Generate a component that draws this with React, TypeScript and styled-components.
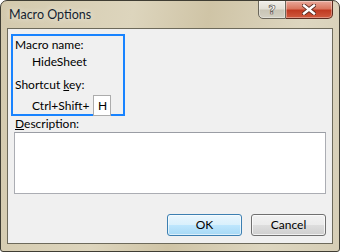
import styled, { createGlobalStyle } from "styled-components"

const GlobalStyle = createGlobalStyle`
    html, body {
        margin: 0;
        padding: 0;
        background: #ffffff;
    }
    body {
        font-family: Lato, "Noto Sans", sans-serif;
        font-size: 12px;
        color: #000;
    }
`

const Window = styled.div`
    width: 340px;
    height: 252px;
    box-sizing: border-box;
    border: 1px solid #3f3d33;
    border-radius: 7px 7px 3px 3px;
    background: linear-gradient(100deg, #d3c9ad 0%, #ddd5bd 35%, #cfc4a6 55%, #ddd6c0 80%, #d6ceb6 100%);
    display: flex;
    flex-direction: column;
    overflow: hidden;
`

const TitleBar = styled.div`
    height: 27px;
    display: flex;
    align-items: flex-start;
    padding: 0 6px 0 8px;
`

const Title = styled.div`
    line-height: 28px;
    font-size: 12.5px;
    color: #141e30;
    text-shadow: 0 0 6px rgba(255, 255, 255, 0.8);
`

const Caption = styled.div`
    margin-left: auto;
    display: flex;
`

const CaptionButton = styled.div<{ $close?: boolean }>`
    width: ${(p) => (p.$close ? "47px" : "28px")};
    height: 19px;
    margin-top: -1px;
    box-sizing: border-box;
    border: 1px solid ${(p) => (p.$close ? "#5b2a1e" : "#6a665a")};
    border-left-width: ${(p) => (p.$close ? "0" : "1px")};
    border-radius: ${(p) => (p.$close ? "0 0 5px 0" : "0 0 0 5px")};
    background: ${(p) =>
        p.$close
            ? "linear-gradient(#e9a99b 0%, #d9775f 45%, #c03a22 55%, #cf5a3e 100%)"
            : "linear-gradient(#f1efe9 0%, #e3e0d6 45%, #c9c5b6 55%, #d3d0c3 100%)"};
    box-shadow: inset 0 0 0 1px rgba(255, 255, 255, 0.35);
    display: flex;
    align-items: center;
    justify-content: center;
`

const HelpGlyph = styled.span`
    font-family: "DejaVu Sans", sans-serif;
    font-weight: bold;
    font-size: 13px;
    color: #fff;
    -webkit-text-stroke: 0.6px #4a473d;
    line-height: 1;
`

const Client = styled.div`
    flex: 1;
    margin: 0 6px 7px;
    border: 1px solid #6d6a5b;
    background: #f0f0f0;
    display: flex;
    flex-direction: column;
    padding: 0 6px 7px 3px;
`

const Group = styled.div`
    margin-top: 5px;
    width: 114px;
    height: 82px;
    box-sizing: border-box;
    border: 2px solid #1883ff;
    padding: 1px 0 0 2px;
`

const Label = styled.div<{ $indent?: boolean }>`
    height: 16px;
    line-height: 16px;
    white-space: nowrap;
    padding-left: ${(p) => (p.$indent ? "17px" : "0")};
`

const Spacer = styled.div<{ $h: number }>`
    height: ${(p) => p.$h}px;
`

const KeyRow = styled.div`
    display: flex;
    align-items: center;
    padding-left: 17px;
    margin-top: 2px;
    white-space: nowrap;
`

const KeyBox = styled.div`
    width: 18px;
    height: 21px;
    box-sizing: border-box;
    border: 1px solid #acacac;
    background: #fff;
    margin-left: 4px;
    display: flex;
    align-items: center;
    justify-content: center;
`

const DescLabel = styled.div`
    margin: 0 0 0 4px;
    height: 16px;
    line-height: 16px;
`

const TextArea = styled.div`
    margin: 0 0 0 3px;
    height: 62px;
    box-sizing: border-box;
    border: 1px solid #abadb3;
    border-top-color: #9a9da4;
    background: #fff;
`

const Buttons = styled.div`
    margin-top: auto;
    display: flex;
    justify-content: flex-end;
    gap: 9px;
`

const Button = styled.div<{ $default?: boolean }>`
    width: 75px;
    height: 22px;
    box-sizing: border-box;
    border: 1px solid ${(p) => (p.$default ? "#3c7fb1" : "#707070")};
    border-radius: 3px;
    background: ${(p) =>
        p.$default
            ? "linear-gradient(#eaf6fd 0%, #d9f0fc 50%, #bee6fd 51%, #a7d9f5 100%)"
            : "linear-gradient(#f2f2f2 0%, #ebebeb 50%, #dddddd 51%, #cfcfcf 100%)"};
    box-shadow: inset 0 0 0 1px ${(p) => (p.$default ? "rgba(255,255,255,0.6)" : "rgba(255,255,255,0.7)")};
    display: flex;
    align-items: center;
    justify-content: center;
    line-height: 1;
`

function App() {
    return (
        <>
            <GlobalStyle />
            <Window>
                <TitleBar>
                    <Title>Macro Options</Title>
                    <Caption>
                        <CaptionButton>
                            <HelpGlyph>?</HelpGlyph>
                        </CaptionButton>
                        <CaptionButton $close>
                            <svg width="14" height="11" viewBox="0 0 14 11">
                                <path d="M2 1.5 L12 9.5 M12 1.5 L2 9.5" stroke="#5a2a20" strokeWidth="4.2" strokeLinecap="square" />
                                <path d="M2 1.5 L12 9.5 M12 1.5 L2 9.5" stroke="#ffffff" strokeWidth="2.4" strokeLinecap="square" />
                            </svg>
                        </CaptionButton>
                    </Caption>
                </TitleBar>
                <Client>
                    <Group>
                        <Label>Macro name:</Label>
                        <Spacer $h={1} />
                        <Label $indent>HideSheet</Label>
                        <Spacer $h={7} />
                        <Label>
                            Shortcut <u>k</u>ey:
                        </Label>
                        <KeyRow>
                            Ctrl+Shift+
                            <KeyBox>H</KeyBox>
                        </KeyRow>
                    </Group>
                    <DescLabel>
                        <u>D</u>escription:
                    </DescLabel>
                    <TextArea />
                    <Buttons>
                        <Button $default>OK</Button>
                        <Button>Cancel</Button>
                    </Buttons>
                </Client>
            </Window>
        </>
    )
}

export default App
